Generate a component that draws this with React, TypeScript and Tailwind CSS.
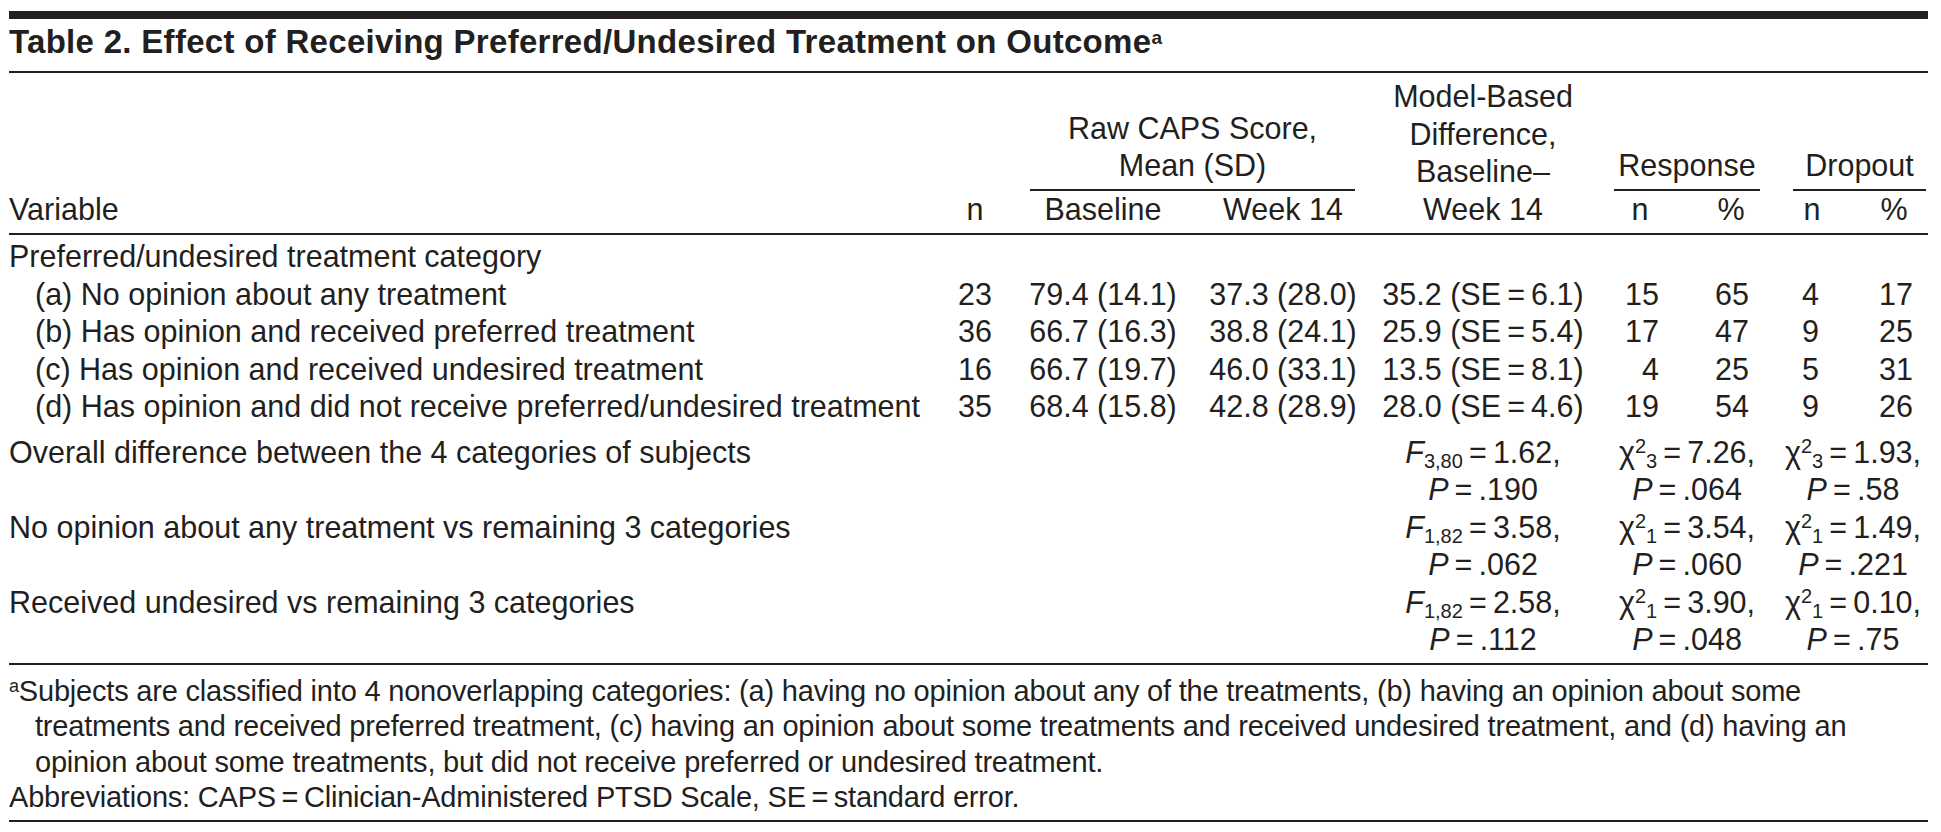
import React from 'react';

const grid = 'grid grid-cols-[931px_70px_186px_174px_226px_88px_94px_68px_82px]';
const EQ = '\u2009=\u2009';

type Row = {
  label: string;
  n: string;
  base: string;
  wk: string;
  diff: string;
  se: string;
  rn: string;
  rp: string;
  dn: string;
  dp: string;
};

const rows: Row[] = [
  { label: '(a) No opinion about any treatment', n: '23', base: '79.4 (14.1)', wk: '37.3 (28.0)', diff: '35.2', se: '6.1', rn: '15', rp: '65', dn: '4', dp: '17' },
  { label: '(b) Has opinion and received preferred treatment', n: '36', base: '66.7 (16.3)', wk: '38.8 (24.1)', diff: '25.9', se: '5.4', rn: '17', rp: '47', dn: '9', dp: '25' },
  { label: '(c) Has opinion and received undesired treatment', n: '16', base: '66.7 (19.7)', wk: '46.0 (33.1)', diff: '13.5', se: '8.1', rn: '4', rp: '25', dn: '5', dp: '31' },
  { label: '(d) Has opinion and did not receive preferred/undesired treatment', n: '35', base: '68.4 (15.8)', wk: '42.8 (28.9)', diff: '28.0', se: '4.6', rn: '19', rp: '54', dn: '9', dp: '26' },
];

type Stat = { v: string; p: string };
type Test = {
  label: string;
  fdf: string;
  f: Stat;
  cdf: string;
  resp: Stat;
  drop: Stat;
};

const tests: Test[] = [
  { label: 'Overall difference between the 4 categories of subjects', fdf: '3,80', f: { v: '1.62', p: '.190' }, cdf: '3', resp: { v: '7.26', p: '.064' }, drop: { v: '1.93', p: '.58' } },
  { label: 'No opinion about any treatment vs remaining 3 categories', fdf: '1,82', f: { v: '3.58', p: '.062' }, cdf: '1', resp: { v: '3.54', p: '.060' }, drop: { v: '1.49', p: '.221' } },
  { label: 'Received undesired vs remaining 3 categories', fdf: '1,82', f: { v: '2.58', p: '.112' }, cdf: '1', resp: { v: '3.90', p: '.048' }, drop: { v: '0.10', p: '.75' } },
];

function FStat({ df, s }: { df: string; s: Stat }) {
  return (
    <>
      <div>
        <i>F</i>
        <sub className="text-[20px]">{df}</sub>
        {EQ}
        {s.v},
      </div>
      <div>
        <i>P</i>
        {EQ}
        {s.p}
      </div>
    </>
  );
}

function ChiStat({ df, s }: { df: string; s: Stat }) {
  return (
    <>
      <div>
        χ<sup className="text-[20px]">2</sup>
        <sub className="text-[20px]">{df}</sub>
        {EQ}
        {s.v},
      </div>
      <div>
        <i>P</i>
        {EQ}
        {s.p}
      </div>
    </>
  );
}

export default function App() {
  return (
    <div className="min-h-screen bg-white text-[#231f20] font-['Liberation_Sans',Arial,sans-serif] text-[30.5px] leading-[37.5px]">
      <div className="ml-[9px] w-[1919px] pt-[11px]">
        <div className="h-[8px] bg-[#231f20]" />

        {/* title */}
        <div className="pt-[3px] pb-[9px] border-b-2 border-[#231f20] text-[33px] leading-[40px] font-bold tracking-[0.3px] whitespace-nowrap">
          Table 2. Effect of Receiving Preferred/Undesired Treatment on Outcome
          <sup className="text-[19px] font-bold">a</sup>
        </div>

        {/* column heads */}
        <div className={`${grid} grid-rows-[auto_37.5px] pt-[5px] pb-[5px] border-b-2 border-[#231f20]`}>
          <div className="col-start-1 row-start-1 row-span-2 self-end">Variable</div>
          <div className="col-start-2 row-start-1 row-span-2 self-end text-center">n</div>
          <div className="col-start-3 col-span-2 row-start-1 self-end ml-[20px] mr-[15px] pb-[4px] border-b-2 border-[#231f20] text-center">
            Raw CAPS Score,
            <br />
            Mean (SD)
          </div>
          <div className="col-start-3 row-start-2 text-center">Baseline</div>
          <div className="col-start-4 row-start-2 text-center">Week 14</div>
          <div className="col-start-5 row-start-1 row-span-2 self-end text-center">
            Model-Based
            <br />
            Difference,
            <br />
            Baseline–
            <br />
            Week 14
          </div>
          <div className="col-start-6 col-span-2 row-start-1 self-end ml-[18px] mr-[18px] pb-[4px] border-b-2 border-[#231f20] text-center">
            Response
          </div>
          <div className="col-start-6 row-start-2 text-center">n</div>
          <div className="col-start-7 row-start-2 text-center">%</div>
          <div className="col-start-8 col-span-2 row-start-1 self-end ml-[15px] mr-[2px] pb-[4px] border-b-2 border-[#231f20] text-center">
            Dropout
          </div>
          <div className="col-start-8 row-start-2 text-center">n</div>
          <div className="col-start-9 row-start-2 text-center pl-[14px]">%</div>
        </div>

        {/* body */}
        <div className="pt-[3px] pb-[4px] border-b-2 border-[#231f20] whitespace-nowrap">
          <div className="h-[37.5px]">Preferred/undesired treatment category</div>
          {rows.map((r) => (
            <div key={r.label} className={`${grid} h-[37.5px]`}>
              <div className="pl-[26px]">{r.label}</div>
              <div className="text-right pr-[18px]">{r.n}</div>
              <div className="text-center">{r.base}</div>
              <div className="text-center">{r.wk}</div>
              <div className="text-center">
                {r.diff} (SE{EQ}
                {r.se})
              </div>
              <div className="text-right pr-[25px]">{r.rn}</div>
              <div className="text-right pr-[29px]">{r.rp}</div>
              <div className="text-right pr-[27px]">{r.dn}</div>
              <div className="text-right pr-[15px]">{r.dp}</div>
            </div>
          ))}
          <div className="mt-[8px]">
            {tests.map((t) => (
              <div key={t.label} className={`${grid} h-[75px]`}>
                <div>{t.label}</div>
                <div className="col-start-5 text-center">
                  <FStat df={t.fdf} s={t.f} />
                </div>
                <div className="col-start-6 col-span-2 text-center">
                  <ChiStat df={t.cdf} s={t.resp} />
                </div>
                <div className="col-start-8 col-span-2 text-center">
                  <ChiStat df={t.cdf} s={t.drop} />
                </div>
              </div>
            ))}
          </div>
        </div>

        {/* footnotes */}
        <div className="pt-[9px] pb-[4px] border-b-2 border-[#231f20] text-[29px] leading-[35.5px] tracking-[-0.2px] whitespace-nowrap">
          <div>
            <sup className="text-[18px]">a</sup>Subjects are classified into 4 nonoverlapping categories: (a) having no opinion about any of the treatments, (b) having an opinion about some
          </div>
          <div className="pl-[26px]">
            treatments and received preferred treatment, (c) having an opinion about some treatments and received undesired treatment, and (d) having an
          </div>
          <div className="pl-[26px]">
            opinion about some treatments, but did not receive preferred or undesired treatment.
          </div>
          <div>
            Abbreviations: CAPS{EQ}Clinician-Administered PTSD Scale, SE{EQ}standard error.
          </div>
        </div>
      </div>
    </div>
  );
}
